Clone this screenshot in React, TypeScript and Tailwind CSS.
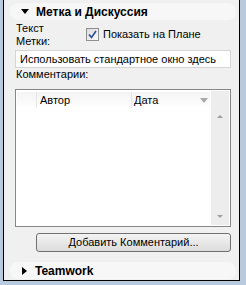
export default function App() {
  return (
    <div
      className="w-[246px] h-[285px] bg-[#b9cadf] pl-[3px] pr-[6px] pb-[4px] overflow-hidden"
      style={{ fontFamily: '"Liberation Sans", Arial, sans-serif' }}
    >
      <div className="h-[281px] bg-[#f0f0f0] border-l border-r border-b border-black flex flex-col text-[11px] text-black">
        <div className="mt-[3px] ml-[6px] mr-[3px] h-[17px] rounded-[8px] bg-[#f7f7f7] flex items-center">
          <span className="ml-[11px] w-0 h-0 border-l-[4px] border-r-[4px] border-t-[5px] border-l-transparent border-r-transparent border-t-black" />
          <span className="ml-[7px] font-bold text-[12px]">Метка и Дискуссия</span>
        </div>

        <div className="pl-[11px] pr-[8px] flex flex-col">
          <div className="flex items-center pl-[1px]">
            <div className="w-[70px] leading-[13px] pt-[2px]">
              <div>Текст</div>
              <div>Метки:</div>
            </div>
            <div className="flex items-center gap-[4px]">
              <span className="w-[13px] h-[13px] border border-[#8e8f8f] bg-gradient-to-br from-[#dcdcdc] to-[#fbfbfb] flex items-center justify-center">
                <svg width="9" height="9" viewBox="0 0 9 9">
                  <path d="M1 4.5 L3.5 7.5 L8 1" fill="none" stroke="#2a4b9e" strokeWidth="1.6" />
                </svg>
              </span>
              <span>Показать на Плане</span>
            </div>
          </div>

          <div className="mt-[2px] h-[18px] bg-white border border-[#d5d5d5] flex items-center pl-[4px]">
            Использовать стандартное окно здесь
          </div>

          <div className="pl-[1px] leading-[13px]">Комментарии:</div>

          <div className="mt-[8px] h-[138px] bg-white border border-[#868686] flex p-[1px]">
            <div className="flex-1 flex flex-col">
              <div className="h-[16px] mt-[1px] bg-gradient-to-b from-[#f3f3f3] to-white flex items-center">
                <div className="w-[20px] h-full border-r border-[#e6e6e6]" />
                <div className="w-[95px] h-full border-r border-[#e6e6e6] pl-[3px] flex items-center">Автор</div>
                <div className="flex-1 h-full pl-[2px] pr-[2px] flex items-center justify-between">
                  <span>Дата</span>
                  <span className="w-0 h-0 border-l-[4px] border-r-[4px] border-t-[5px] border-l-transparent border-r-transparent border-t-[#a8a8a8]" />
                </div>
              </div>
            </div>
            <div className="w-[18px] ml-[1px] bg-[#ededed] flex flex-col items-center justify-between pt-[24px] pb-[7px]">
              <span className="w-0 h-0 border-l-[3px] border-r-[3px] border-b-[3px] border-l-transparent border-r-transparent border-b-[#a0a0a0]" />
              <span className="w-0 h-0 border-l-[3px] border-r-[3px] border-t-[3px] border-l-transparent border-r-transparent border-t-[#a0a0a0]" />
            </div>
          </div>

          <div className="mt-[6px] ml-[21px] h-[19px] rounded-[3px] border border-[#707070] bg-gradient-to-b from-[#f3f3f3] to-[#dcdcdc] flex items-center justify-center">
            Добавить Комментарий...
          </div>
        </div>

        <div className="mt-auto mb-[1px] ml-[6px] mr-[3px] h-[17px] rounded-[8px] bg-[#f7f7f7] flex items-center">
          <span className="ml-[12px] w-0 h-0 border-t-[4px] border-b-[4px] border-l-[5px] border-t-transparent border-b-transparent border-l-black" />
          <span className="ml-[8px] font-bold text-[12px]">Teamwork</span>
        </div>
      </div>
    </div>
  );
}
